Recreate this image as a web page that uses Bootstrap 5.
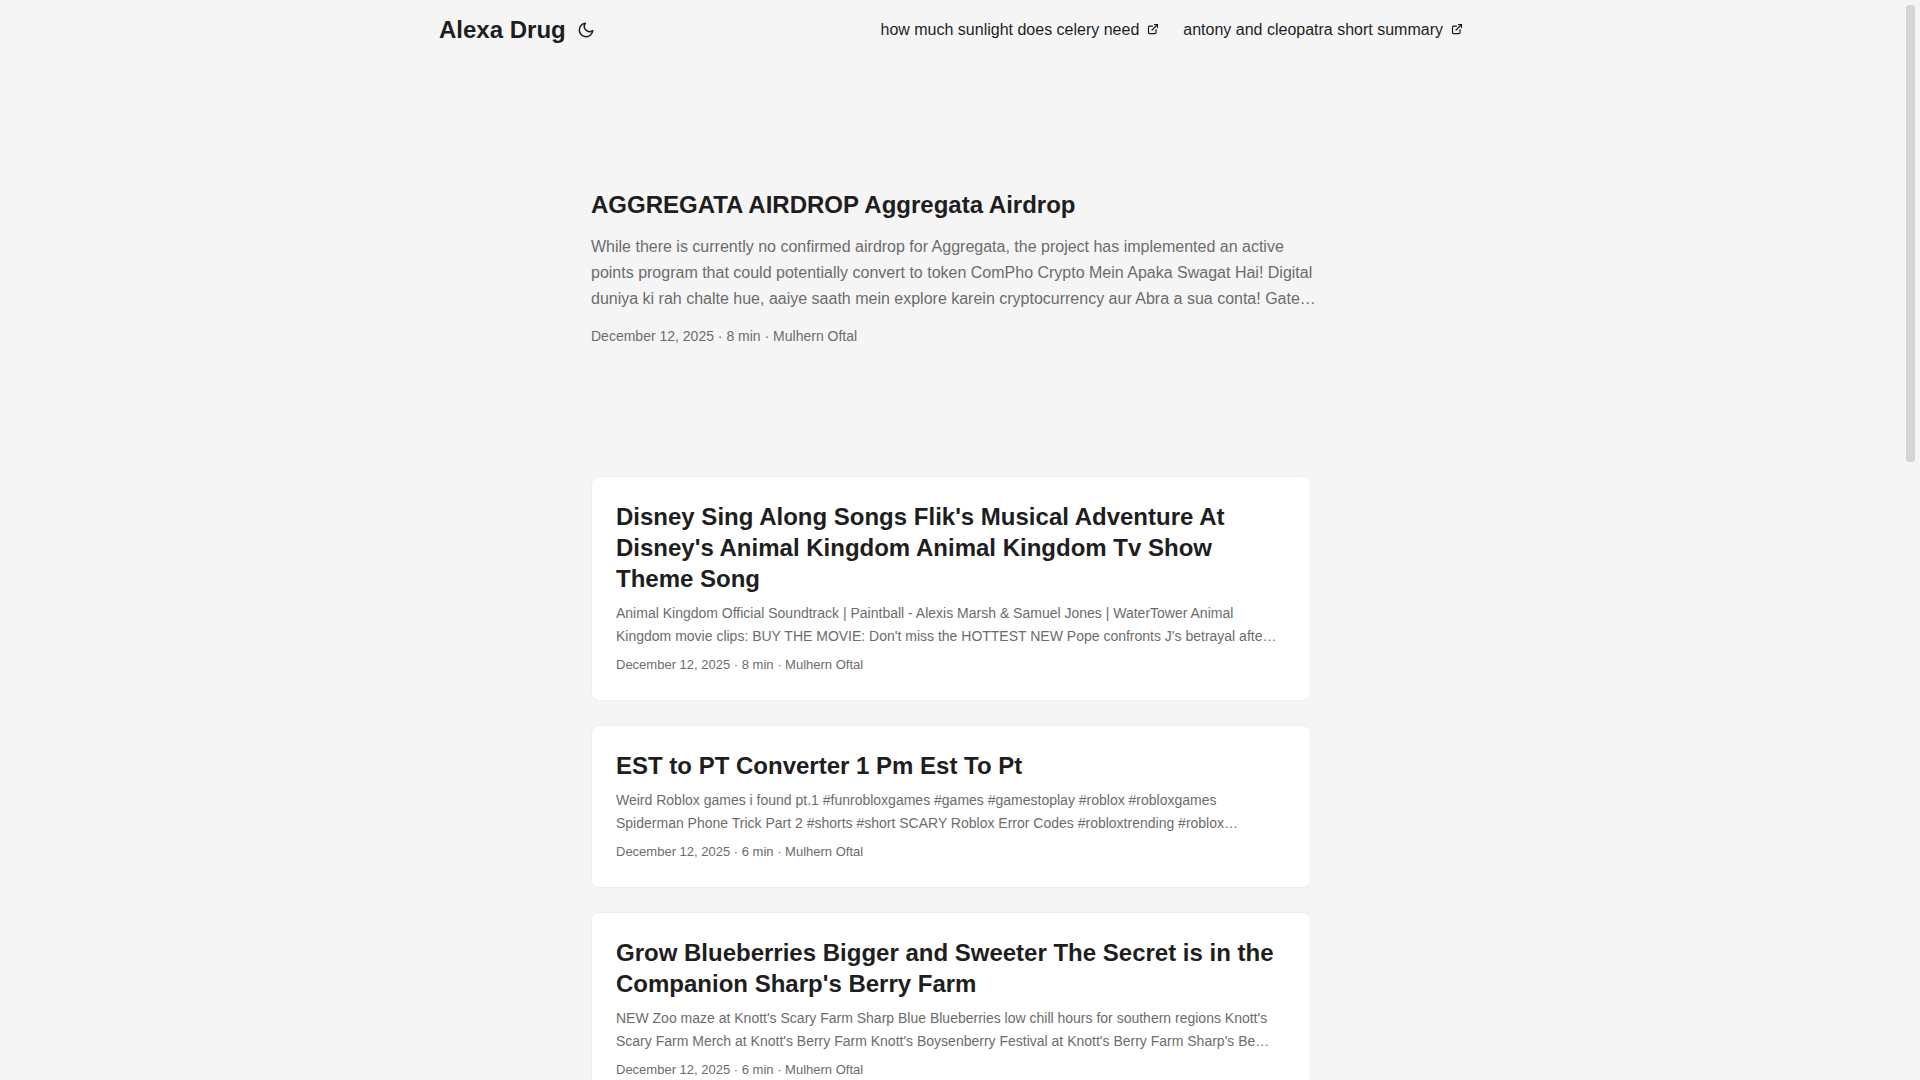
<!DOCTYPE html>
<html lang="en">
<head>
<meta charset="utf-8">
<meta name="viewport" content="width=device-width, initial-scale=1">
<title>Alexa Drug</title>
<link href="https://cdn.jsdelivr.net/npm/bootstrap@5.3.0/dist/css/bootstrap.min.css" rel="stylesheet">
<style>
  :root { --ink: #1e1e1e; --soft: #6c6c6c; --line: #eee; --page: #f5f5f5; }
  body { font-family: "Liberation Sans", Arial, sans-serif; font-size: 16px; background: var(--page); color: var(--ink); padding-right: 18px; }
  a { color: var(--ink); text-decoration: none; }
  .site-nav { max-width: 1072px; min-height: 60px; }
  .site-name { font-size: 24px; line-height: 36px; font-weight: 700; }
  .theme-btn { color: var(--ink); line-height: 1; }
  .menu { column-gap: 24px; }
  .menu svg { margin-bottom: 2px; }
  .site-main { max-width: 768px; }
  .lead-post { min-height: 320px; margin: 24px 0 48px; }
  .post-title { font-size: 24px; line-height: 31px; font-weight: 700; }
  .lead-text { font-size: 16px; line-height: 26px; margin: 14px 0 13px; color: var(--soft); }
  .lead-meta { font-size: 14px; line-height: 23px; color: var(--soft); }
  .post-card { border: 1px solid var(--line); border-radius: 8px; }
  .post-text { font-size: 14px; line-height: 23px; margin: 8px 0 7px; color: var(--soft); }
  .post-meta { font-size: 13px; line-height: 20px; padding-bottom: 1px; color: var(--soft); }
  .scroll-rail { width: 19px; padding: 5px; }
  .scroll-thumb { height: 42.7%; border-radius: 3px; background: #d5d5d5; }
  @media (min-width: 768px) { .lead-text { white-space: nowrap; } }
</style>
</head>
<body class="vh-100 overflow-hidden">
<header>
  <nav class="site-nav mx-auto px-4 d-flex flex-wrap align-items-center justify-content-between">
    <div class="d-flex align-items-center gap-2">
      <a class="site-name" href="#">Alexa Drug</a>
      <button class="theme-btn btn p-0 border-0 d-flex" type="button" aria-label="Toggle theme">
        <svg width="24" height="18" viewBox="0 0 24 24" fill="none" stroke="currentColor" stroke-width="2" stroke-linecap="round" stroke-linejoin="round"><path d="M21 12.79A9 9 0 1 1 11.21 3 7 7 0 0 0 21 12.79z"/></svg>
      </button>
    </div>
    <ul class="menu list-unstyled d-flex flex-wrap mb-0">
      <li><a class="d-flex align-items-center gap-2" href="#">how much sunlight does celery need
        <svg width="12" height="12" viewBox="0 0 24 24" fill="none" stroke="currentColor" stroke-width="2.5" stroke-linecap="round" stroke-linejoin="round"><path d="M18 13v6a2 2 0 0 1-2 2H5a2 2 0 0 1-2-2V8a2 2 0 0 1 2-2h6"/><path d="M15 3h6v6"/><path d="M10 14L21 3"/></svg></a></li>
      <li><a class="d-flex align-items-center gap-2" href="#">antony and cleopatra short summary
        <svg width="12" height="12" viewBox="0 0 24 24" fill="none" stroke="currentColor" stroke-width="2.5" stroke-linecap="round" stroke-linejoin="round"><path d="M18 13v6a2 2 0 0 1-2 2H5a2 2 0 0 1-2-2V8a2 2 0 0 1 2-2h6"/><path d="M15 3h6v6"/><path d="M10 14L21 3"/></svg></a></li>
    </ul>
  </nav>
</header>
<main class="site-main mx-auto p-4">
  <article class="lead-post d-flex flex-column justify-content-center">
    <h1 class="post-title mb-0"><a href="#">AGGREGATA AIRDROP Aggregata Airdrop</a></h1>
    <p class="lead-text">While there is currently no confirmed airdrop for Aggregata, the project has implemented an active<br> points program that could potentially convert to token ComPho Crypto Mein Apaka Swagat Hai! Digital<br> duniya ki rah chalte hue, aaiye saath mein explore karein cryptocurrency aur Abra a sua conta! Gate…</p>
    <footer class="lead-meta">December 12, 2025&nbsp;·&nbsp;8 min&nbsp;·&nbsp;Mulhern Oftal</footer>
  </article>
  <article class="post-card bg-white p-4 mb-4">
    <h2 class="post-title mb-0"><a href="#">Disney Sing Along Songs Flik's Musical Adventure At Disney's Animal Kingdom Animal Kingdom Tv Show Theme Song</a></h2>
    <p class="post-text">Animal Kingdom Official Soundtrack | Paintball - Alexis Marsh &amp; Samuel Jones | WaterTower Animal Kingdom movie clips: BUY THE MOVIE: Don't miss the HOTTEST NEW Pope confronts J's betrayal afte…</p>
    <footer class="post-meta">December 12, 2025&nbsp;·&nbsp;8 min&nbsp;·&nbsp;Mulhern Oftal</footer>
  </article>
  <article class="post-card bg-white p-4 mb-4">
    <h2 class="post-title mb-0"><a href="#">EST to PT Converter 1 Pm Est To Pt</a></h2>
    <p class="post-text">Weird Roblox games i found pt.1 #funrobloxgames #games #gamestoplay #roblox #robloxgames Spiderman Phone Trick Part 2 #shorts #short SCARY Roblox Error Codes #robloxtrending #roblox…</p>
    <footer class="post-meta">December 12, 2025&nbsp;·&nbsp;6 min&nbsp;·&nbsp;Mulhern Oftal</footer>
  </article>
  <article class="post-card bg-white p-4 mb-4">
    <h2 class="post-title mb-0"><a href="#">Grow Blueberries Bigger and Sweeter The Secret is in the Companion Sharp's Berry Farm</a></h2>
    <p class="post-text">NEW Zoo maze at Knott's Scary Farm Sharp Blue Blueberries low chill hours for southern regions Knott's Scary Farm Merch at Knott's Berry Farm Knott's Boysenberry Festival at Knott's Berry Farm Sharp's Be…</p>
    <footer class="post-meta">December 12, 2025&nbsp;·&nbsp;6 min&nbsp;·&nbsp;Mulhern Oftal</footer>
  </article>
</main>
<div class="scroll-rail position-fixed top-0 end-0 h-100" aria-hidden="true"><div class="scroll-thumb"></div></div>
<script src="https://cdn.jsdelivr.net/npm/bootstrap@5.3.0/dist/js/bootstrap.bundle.min.js"></script>
</body>
</html>
